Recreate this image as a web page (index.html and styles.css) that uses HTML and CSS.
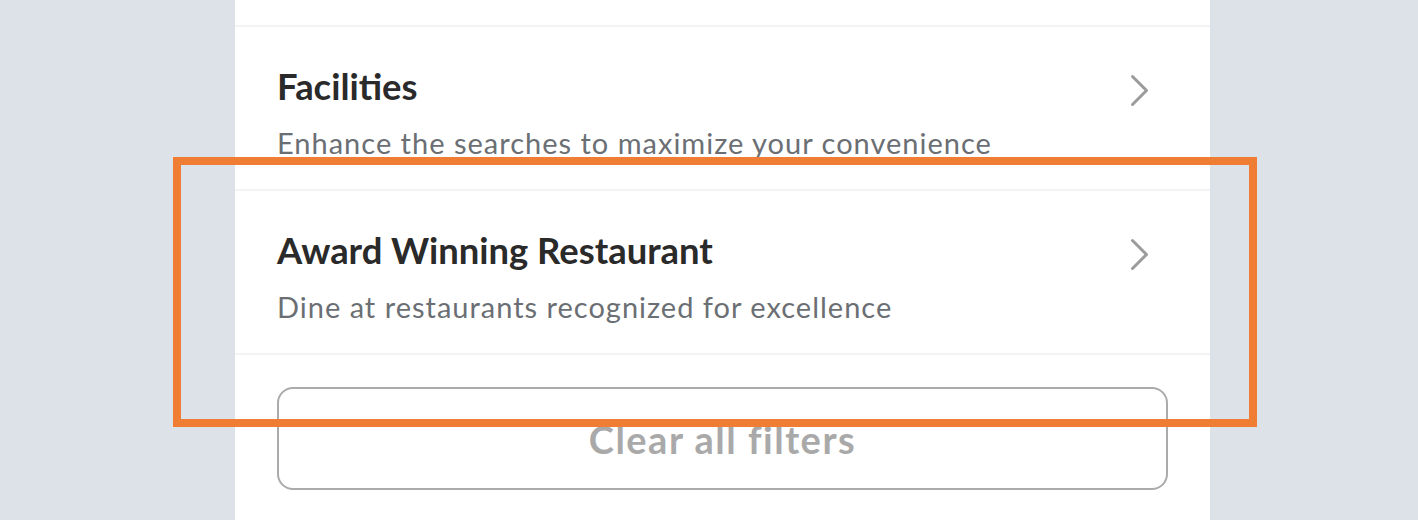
FILE: index.html
```html
<!DOCTYPE html>
<html lang="en">
<head>
    <meta charset="UTF-8">
    <meta name="viewport" content="width=device-width, initial-scale=1.0">
    <title>Filters</title>
    <link rel="stylesheet" href="styles.css">
</head>
<body>
    <div class="panel">
        <div class="row-tail"></div>
        <div class="row">
            <div class="row-text">
                <div class="row-title">Facilities</div>
                <div class="row-sub">Enhance the searches to maximize your convenience</div>
            </div>
            <svg class="chevron" width="19" height="33" viewBox="0 0 19 33">
                <polyline points="2.5,2.5 16.5,16.5 2.5,30.5" fill="none" stroke="#9b9b9b" stroke-width="3" stroke-linecap="round" stroke-linejoin="round"/>
            </svg>
        </div>
        <div class="row">
            <div class="row-text">
                <div class="row-title">Award Winning Restaurant</div>
                <div class="row-sub">Dine at restaurants recognized for excellence</div>
            </div>
            <svg class="chevron" width="19" height="33" viewBox="0 0 19 33">
                <polyline points="2.5,2.5 16.5,16.5 2.5,30.5" fill="none" stroke="#9b9b9b" stroke-width="3" stroke-linecap="round" stroke-linejoin="round"/>
            </svg>
        </div>
        <div class="actions">
            <button class="clear-btn">Clear all filters</button>
        </div>
    </div>

    <!-- highlight frame drawn over the second row -->
    <div class="highlight"></div>
</body>
</html>
```

FILE: styles.css
```css
* {
    box-sizing: border-box;
}
body {
    margin: 0;
    height: 520px;
    overflow: hidden;
    background-color: #dde1e8;
    font-family: Lato, 'Open Sans', sans-serif;
    position: relative;
}
.panel {
    width: 975px;
    height: 520px;
    margin-left: 235px;
    background: #fff;
}
.row-tail {
    height: 27px;
    border-bottom: 2px solid #f2f3f5;
}
.row {
    display: flex;
    height: 164px;
    padding: 39px 61px 0 42px;
    border-bottom: 2px solid #f2f3f5;
}
.row-text {
    flex: 1;
}
.row-title {
    font-size: 36.4px;
    line-height: 40px;
    font-weight: 700;
    color: #2a2a2a;
}
.row-sub {
    margin-top: 20px;
    font-size: 29px;
    line-height: 34px;
    letter-spacing: 1px;
    color: #6b6f74;
}
.chevron {
    margin-top: 8px;
    flex: none;
}
.actions {
    padding: 32px 42px 0;
}
.clear-btn {
    display: flex;
    align-items: center;
    justify-content: center;
    width: 100%;
    height: 103px;
    background: #fff;
    border: 2px solid #ababab;
    border-radius: 16px;
    font-family: Lato, 'Open Sans', sans-serif;
    font-size: 38px;
    font-weight: 700;
    letter-spacing: 1.5px;
    color: #a9a9a9;
    padding: 0;
}
.highlight {
    position: absolute;
    left: 173px;
    top: 157px;
    width: 1084px;
    height: 270px;
    border: 8px solid #ef7d33;
}
```
